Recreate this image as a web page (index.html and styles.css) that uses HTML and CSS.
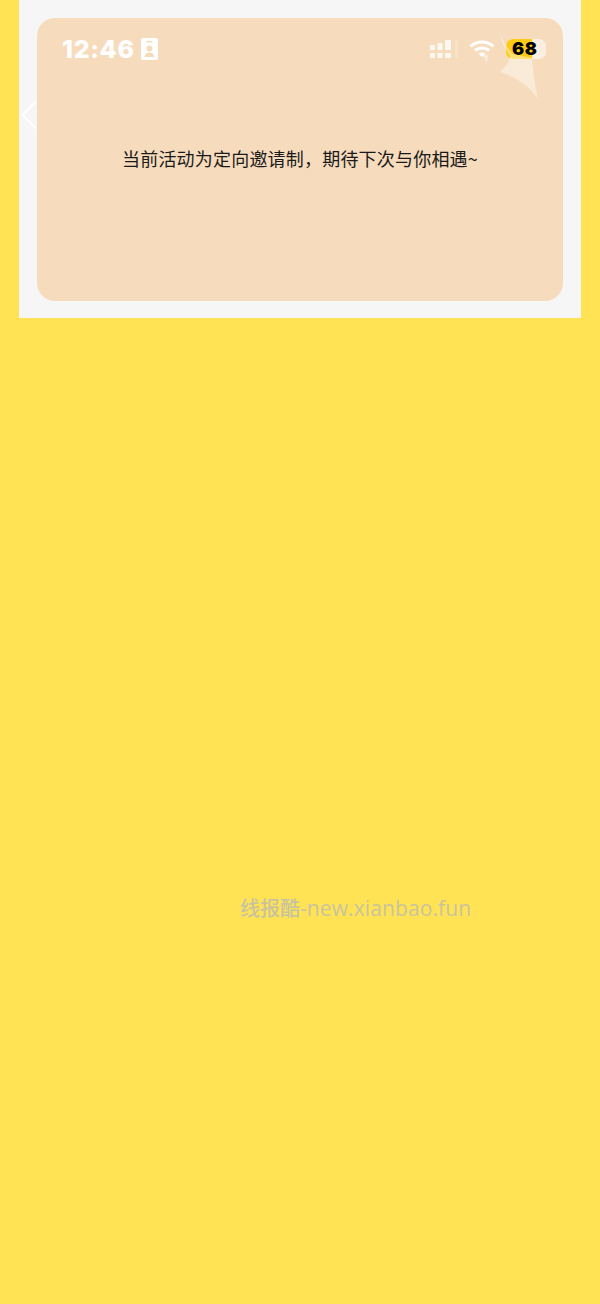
FILE: index.html
```html
<!DOCTYPE html>
<html lang="zh-CN">
<head>
<meta charset="utf-8">
<title>活动</title>
<link rel="stylesheet" href="styles.css">
</head>
<body>
<main class="panel">
  <section class="card">
    <div class="status">
      <div class="status-left">
        <span class="time">12:46</span>
        <svg class="badge" viewBox="0 0 17 22" aria-hidden="true">
          <path fill="#fff" fill-rule="evenodd" d="M2 0h13a2 2 0 0 1 2 2v18a2 2 0 0 1-2 2H2a2 2 0 0 1-2-2V2a2 2 0 0 1 2-2zM5.500 3v1.500h6V3zM8.500 7.500a3 3 0 1 0 0 6 3 3 0 0 0 0-6zM3.500 19h10c0-3-2.200-4.500-5-4.500s-5 1.500-5 4.500z"/>
        </svg>
      </div>
      <div class="status-right">
        <svg class="signal" viewBox="0 0 30 20" aria-hidden="true">
          <g fill="#fff" opacity=".8">
            <rect x="1" y="6" width="5" height="5" rx="1"/>
            <rect x="1" y="14" width="5" height="5" rx="1"/>
            <rect x="8.500" y="4" width="5" height="7" rx="1"/>
            <rect x="8.500" y="14" width="5" height="5" rx="1"/>
            <rect x="16" y="1" width="6" height="10" rx="1"/>
            <rect x="16" y="14" width="6" height="5" rx="1"/>
          </g>
          <rect x="26" y="0" width="3" height="19" rx="1" fill="#fff" opacity=".2"/>
        </svg>
        <svg class="wifi" viewBox="0 0 26 24" aria-hidden="true">
          <g fill="none" stroke="#fff" stroke-width="3">
            <path d="M1.500 7.500C8 1.500 18 1.500 24.500 7.500"/>
            <path d="M6 11.500c4-3.500 10-3.500 14 0"/>
          </g>
          <path fill="#fff" d="M9.500 14.500c2-1.500 5-1.500 7 0L13 18z"/>
          <path fill="#fff" opacity=".45" d="M13 15l6 1-1 8z"/>
        </svg>
        <span class="battery"><span class="battery-level">68</span></span>
      </div>
    </div>
    <svg class="glow" viewBox="0 0 42 66" aria-hidden="true">
      <path fill="#fff" opacity=".42" d="M2 0C6 9 10 15 15 20L34 24C35 38 37 52 40 66C34 54 20 44 2 38C8 32 12 27 12 22C7 14 3 8 2 0z"/>
    </svg>
    <p class="notice">当前活动为定向邀请制，期待下次与你相遇~</p>
  </section>
  <svg class="back" viewBox="0 0 18 30" aria-hidden="true">
    <path fill="none" stroke="#fff" stroke-width="2" d="M16 1.500 2.500 15 16 28.500"/>
  </svg>
</main>
<p class="watermark">线报酷<span class="watermark-domain">-new.xianbao.fun</span></p>
</body>
</html>
```

FILE: styles.css
```css
html, body {
  margin: 0;
  padding: 0;
}

body {
  position: relative;
  width: 600px;
  height: 1304px;
  overflow: hidden;
  background: #ffe355;
  font-family: "Noto Sans CJK SC", "Noto Sans", sans-serif;
}

.panel {
  position: relative;
  box-sizing: border-box;
  width: 562px;
  height: 318px;
  margin: 0 19px;
  padding: 18px 18px 17px;
  background: #f6f6f6;
}

.card {
  position: relative;
  box-sizing: border-box;
  width: 526px;
  height: 283px;
  padding: 19px 17px 0 25px;
  border-radius: 18px;
  background: #f6dcbc;
}

.status {
  display: flex;
  align-items: center;
  justify-content: space-between;
  height: 24px;
}

.status-left,
.status-right {
  display: flex;
  align-items: center;
}

.status-left {
  gap: 6px;
}

.time {
  font-family: Inter, "Liberation Sans", sans-serif;
  font-size: 25px;
  font-weight: 800;
  line-height: 24px;
  color: #fff;
  letter-spacing: 0.6px;
}

.badge {
  width: 17px;
  height: 22px;
}

.signal {
  width: 30px;
  height: 20px;
  margin-right: 10px;
}

.wifi {
  width: 26px;
  height: 24px;
  margin-top: 4px;
  margin-right: 11px;
}

.battery {
  display: block;
  width: 40px;
  height: 20px;
  border-radius: 7px;
  background: rgba(255, 255, 255, 0.55);
}

.battery-level {
  display: block;
  width: 20px;
  height: 20px;
  padding-left: 6px;
  border-radius: 7px 0 0 7px;
  background: #fdca14;
  font-family: Inter, "Liberation Sans", sans-serif;
  font-size: 18px;
  font-weight: 900;
  line-height: 20px;
  color: #000;
  white-space: nowrap;
  letter-spacing: 0.6px;
}

.glow {
  position: absolute;
  top: 16px;
  left: 461px;
  width: 42px;
  height: 66px;
}

.notice {
  margin: 82px 0 0;
  width: 476px;
  font-size: 18px;
  line-height: 30px;
  letter-spacing: 0.2px;
  color: #1a1a1a;
  text-align: center;
}

.back {
  position: absolute;
  top: 100px;
  left: 1px;
  width: 18px;
  height: 30px;
}

.watermark {
  position: absolute;
  top: 893px;
  left: 240px;
  margin: 0;
  font-family: "Noto Sans CJK SC", sans-serif;
  font-size: 20px;
  font-weight: 500;
  line-height: 30px;
  color: #c9c3a0;
  white-space: nowrap;
}

.watermark-domain {
  font-family: "Open Sans", "Noto Sans", sans-serif;
  font-size: 21px;
  letter-spacing: 0.1px;
}
```
